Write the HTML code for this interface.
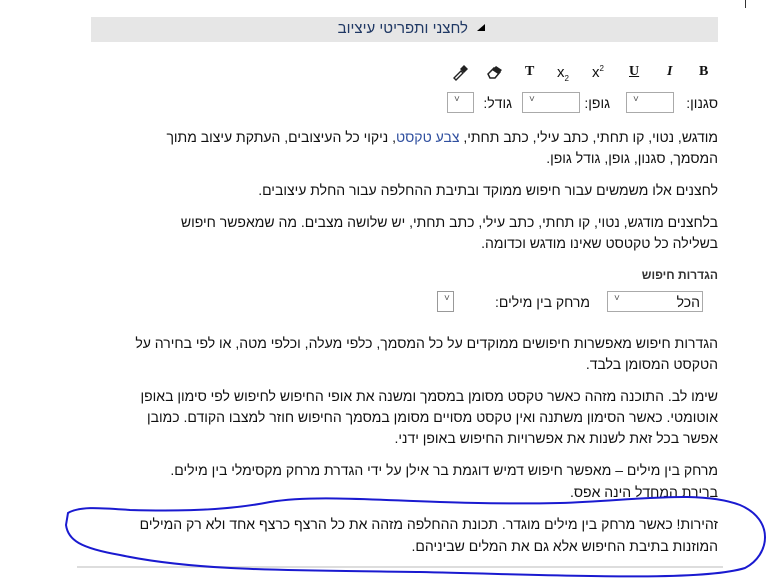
<!DOCTYPE html>
<html><head><meta charset="utf-8"><style>
body{margin:0;width:775px;height:580px;background:#fff;position:relative;overflow:hidden;font-family:"Liberation Sans","DejaVu Sans",sans-serif;color:#111}
.l{position:absolute;right:57px;direction:rtl;white-space:nowrap;font-size:14px;line-height:20px}
.bar{position:absolute;left:91px;top:17px;width:627px;height:25px;background:#e6e6e6}
.sel{position:absolute;height:21px;border:1px solid #aaa;background:#fff;box-sizing:border-box}
.sel:after{content:"˅";position:absolute;left:6px;top:1px;font-size:10px;color:#555}
.ic{position:absolute;top:64px;font-family:"Liberation Serif",serif;font-weight:bold;font-size:14px}
</style></head><body>
<div style="position:absolute;left:745px;top:0;width:1px;height:8px;background:#333"></div>
<div class="bar"></div>
<div class="l" style="right:307px;top:19px;color:#1f3864;font-size:15px">לחצני ותפריטי עיציוב</div>
<div style="position:absolute;left:477px;top:24px;width:0;height:0;border-left:8px solid transparent;border-bottom:7px solid #000"></div>

<div class="ic" style="left:699px">B</div>
<div class="ic" style="left:667px;font-style:italic">I</div>
<div class="ic" style="left:629px;text-decoration:underline">U</div>
<div class="ic" style="left:592px;font-family:'Liberation Sans';font-weight:normal;font-size:15px">x<sup style="font-size:8px">2</sup></div>
<div class="ic" style="left:557px;font-family:'Liberation Sans';font-weight:normal;font-size:15px">x<sub style="font-size:8px">2</sub></div>
<div class="ic" style="left:525px">T</div>
<svg style="position:absolute;left:486px;top:65px" width="17" height="15"><path d="M2 9 L8 3 L14 7 L9 13 L4 13 Z" fill="#fff" stroke="#222" stroke-width="1.5"/><path d="M6 5 L10 1 L16 5 L12 9 Z" fill="#222"/></svg>
<svg style="position:absolute;left:452px;top:64px" width="17" height="17"><path d="M3 15 L2 14 L9 7 L11 9 L4 16 Z" fill="#fff" stroke="#222" stroke-width="1.4"/><path d="M8 5 L12 1 L16 5 L12 9 Z" fill="#222"/></svg>

<div class="l" style="top:93px">סגנון:</div>
<div class="sel" style="left:626px;top:92px;width:48px"></div>
<div class="l" style="right:165px;top:93px">גופן:</div>
<div class="sel" style="left:522px;top:92px;width:58px"></div>
<div class="l" style="right:263px;top:93px">גודל:</div>
<div class="sel" style="left:447px;top:92px;width:27px"></div>

<div class="l" style="top:127px">מודגש, נטוי, קו תחתי, כתב עילי, כתב תחתי, <span style="color:#2f4f9f">צבע טקסט</span>, ניקוי כל העיצובים, העתקת עיצוב מתוך</div>
<div class="l" style="top:148px">המסמך, סגנון, גופן, גודל גופן.</div>
<div class="l" style="top:180px">לחצנים אלו משמשים עבור חיפוש ממוקד ובתיבת ההחלפה עבור החלת עיצובים.</div>
<div class="l" style="top:212px">בלחצנים מודגש, נטוי, קו תחתי, כתב עילי, כתב תחתי, יש שלושה מצבים. מה שמאפשר חיפוש</div>
<div class="l" style="top:233px">בשלילה כל טקטסט שאינו מודגש וכדומה.</div>
<div class="l" style="top:265px;font-size:12px;font-weight:bold;color:#333">הגדרות חיפוש</div>
<div class="sel" style="left:607px;top:291px;width:96px"></div>
<div class="l" style="right:75px;top:292px">הכל</div>
<div class="l" style="right:185px;top:292px">מרחק בין מילים:</div>
<div class="sel" style="left:437px;top:291px;width:17px;border-color:#999"></div>

<div class="l" style="top:333px">הגדרות חיפוש מאפשרות חיפושים ממוקדים על כל המסמך, כלפי מעלה, וכלפי מטה, או לפי בחירה על</div>
<div class="l" style="top:354px">הטקסט המסומן בלבד.</div>
<div class="l" style="top:386px">שימו לב. התוכנה מזהה כאשר טקסט מסומן במסמך ומשנה את אופי החיפוש לחיפוש לפי סימון באופן</div>
<div class="l" style="top:407px">אוטומטי. כאשר הסימון משתנה ואין טקסט מסויים מסומן במסמך החיפוש חוזר למצבו הקודם. כמובן</div>
<div class="l" style="top:428px">אפשר בכל זאת לשנות את אפשרויות החיפוש באופן ידני.</div>
<div class="l" style="top:460px">מרחק בין מילים – מאפשר חיפוש דמיש דוגמת בר אילן על ידי הגדרת מרחק מקסימלי בין מילים.</div>
<div class="l" style="top:482px">ברירת המחדל הינה אפס.</div>
<div class="l" style="top:514px">זהירות! כאשר מרחק בין מילים מוגדר. תכונת ההחלפה מזהה את כל הרצף כרצף אחד ולא רק המילים</div>
<div class="l" style="top:536px">המוזנות בתיבת החיפוש אלא גם את המלים שביניהם.</div>
<div style="position:absolute;left:77px;top:566px;width:646px;height:2px;background:#ddd"></div>
<svg style="position:absolute;left:0;top:0" width="775" height="580"><path d="M68 513 C80 506 100 508 130 510 C200 512 240 508 270 502 C330 492 420 506 560 503 C640 500 700 490 740 505 C775 520 770 555 745 568 C700 582 560 575 420 572 C300 570 200 572 120 555 C80 548 68 540 66 525 Z" fill="none" stroke="#1a1ad0" stroke-width="2"/></svg>
</body></html>
